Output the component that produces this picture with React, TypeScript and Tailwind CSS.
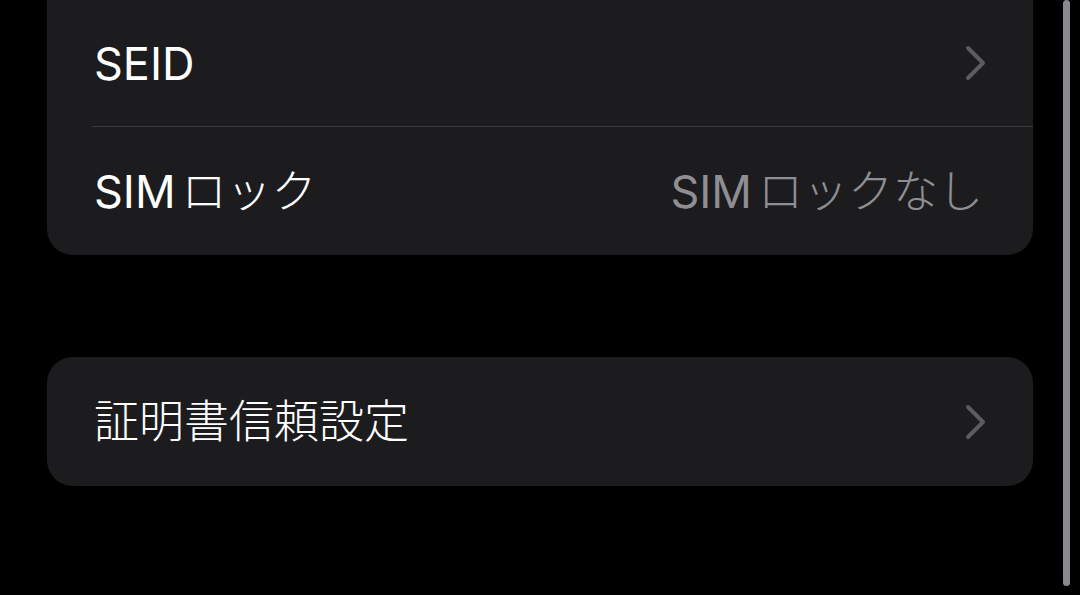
const font = { fontFamily: 'Inter, "Noto Sans CJK JP", sans-serif' }

function Chevron() {
  return (
    <svg width="24" height="38" viewBox="0 0 24 38" fill="none" className="shrink-0">
      <path
        d="M5 4 L20 19 L5 34"
        stroke="#5b5b60"
        strokeWidth="4"
        strokeLinecap="round"
        strokeLinejoin="round"
      />
    </svg>
  )
}

// Latin part in regular weight, kana/kanji part in light, like iOS mixed text
function Mixed({ latin, jp }: { latin?: string; jp?: string }) {
  return (
    <>
      {latin && <span className="font-normal">{latin}</span>}
      {jp && <span className={`font-light ${latin ? 'ml-[6px]' : ''}`}>{jp}</span>}
    </>
  )
}

function Row({
  label,
  value,
  chevron,
  className,
}: {
  label: { latin?: string; jp?: string }
  value?: { latin?: string; jp?: string }
  chevron?: boolean
  className?: string
}) {
  return (
    <div className={`flex items-center justify-between pl-[47px] ${className ?? ''}`}>
      <span className="text-[45px] text-white leading-none">
        <Mixed {...label} />
      </span>
      {value && (
        <span className="text-[45px] text-[#8e8e93] leading-none">
          <Mixed {...value} />
        </span>
      )}
      {chevron && <Chevron />}
    </div>
  )
}

export default function App() {
  return (
    <div className="relative w-[1080px] h-[595px] overflow-hidden bg-black" style={font}>
      <div className="pl-[47px] pr-[47px]">
        <div className="rounded-b-[26px] bg-[#1c1c1e]">
          <Row label={{ latin: 'SEID' }} chevron className="h-[126px] pr-[46px]" />
          <div className="ml-[45px] h-px bg-[#3a3a3c]" />
          <Row
            label={{ latin: 'SIM', jp: 'ロック' }}
            value={{ latin: 'SIM', jp: 'ロックなし' }}
            className="h-[128px] pr-[50px]"
          />
        </div>
        <div className="mt-[102px] rounded-[26px] bg-[#1c1c1e]">
          <Row label={{ jp: '証明書信頼設定' }} chevron className="h-[129px] pr-[46px]" />
        </div>
      </div>
      {/* scroll indicator */}
      <div className="absolute right-[10px] top-0 h-[586px] w-[7px] rounded-full bg-[#8a8a8e]" />
    </div>
  )
}
